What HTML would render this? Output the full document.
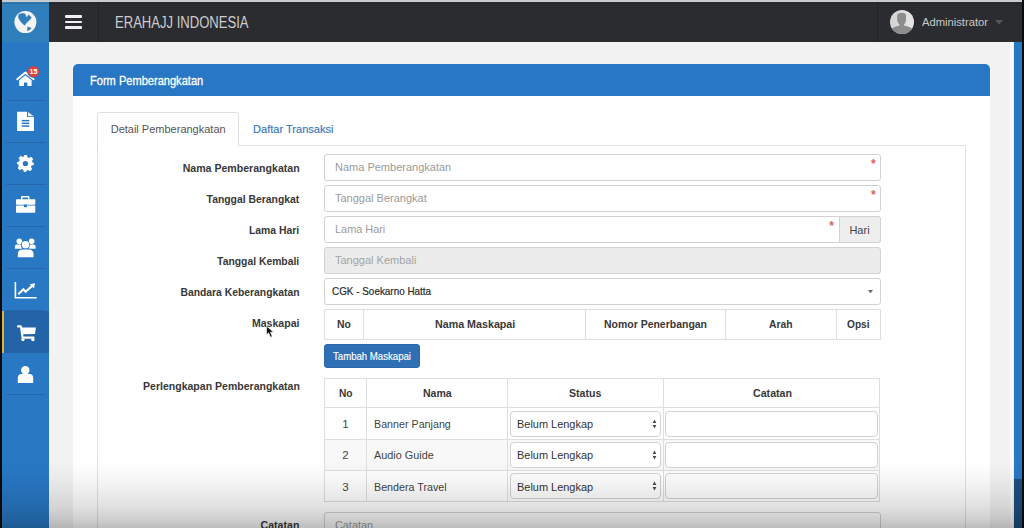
<!DOCTYPE html>
<html><head><meta charset="utf-8">
<style>
*{box-sizing:border-box;margin:0;padding:0}
html,body{width:1024px;height:528px;overflow:hidden;background:#f2f2f2;font-family:"Liberation Sans",sans-serif;position:relative}
.a{position:absolute}
.t{position:absolute;white-space:nowrap;line-height:1}
.inp{position:absolute;background:#fff;border:1px solid #d2d2d2;border-radius:3px}
.hl{position:absolute;height:1px;background:#dedede}
.vl{position:absolute;width:1px;background:#dedede}
.sep{position:absolute;left:6px;width:40px;height:1px;background:#2567ab}
.ic{position:absolute}

</style></head>
<body>
<div id="wrap" style="position:absolute;left:0;top:0;width:1024px;height:528px">
<!-- frame strips -->
<div class="a" style="left:0;top:0;width:1024px;height:2.3px;background:#c9cbcd"></div>
<div class="a" style="left:0;top:0;width:2px;height:528px;background:#0b0b0b"></div>
<div class="a" style="left:1022px;top:0;width:2px;height:528px;background:#0b0b0b"></div>

<!-- header -->
<div class="a" style="left:49px;top:2px;width:973px;height:40px;background:#2b2c30"></div>
<div class="a" style="left:49px;top:3px;width:973px;height:1px;background:#242529"></div>
<div class="a" style="left:98px;top:2px;width:1px;height:40px;background:#222326"></div>
<div class="a" style="left:877px;top:2px;width:1px;height:40px;background:#222326"></div>
<div class="a" style="left:2px;top:2px;width:47px;height:40px;background:#317fba"></div>
<div class="a" style="left:2px;top:3px;width:47px;height:1px;background:#2b6c9f"></div>
<!-- hamburger -->
<div class="a" style="left:65px;top:15px;width:17px;height:2.5px;background:#f0f0f0;border-radius:1px"></div>
<div class="a" style="left:65px;top:20.5px;width:17px;height:2.5px;background:#f0f0f0;border-radius:1px"></div>
<div class="a" style="left:65px;top:26px;width:17px;height:2.5px;background:#f0f0f0;border-radius:1px"></div>
<!-- globe -->
<svg class="ic" style="left:14px;top:11px" width="23" height="23" viewBox="0 0 23 23">
<circle cx="11.4" cy="11.1" r="11" fill="#f4f4f4"/>
<path d="M4.4 5.9 Q4.4 3.6 5.6 2.9 L8.9 2.6 L10.9 2.8 L11.4 4.2 L12.5 6.3 L13.9 5.6 L14.1 4.2 L15 4.3 L17.3 6.4 L15.6 9 L12.6 11.6 L10.6 14.2 L8 11.9 L5.5 8.8 Z" fill="#317fba" stroke="#317fba" stroke-width="0.6" stroke-linejoin="round"/>
<path d="M13.7 16 L17.3 17.1 L15.3 19 L13.4 19.7 Z" fill="#317fba" stroke="#317fba" stroke-width="0.5" stroke-linejoin="round"/>
</svg>
<!-- avatar -->
<svg class="ic" style="left:890px;top:10px" width="24" height="24" viewBox="0 0 24 24">
<defs><clipPath id="cc"><circle cx="12" cy="12" r="12"/></clipPath>
<linearGradient id="ag" x1="0" y1="0" x2="1" y2="0"><stop offset="0" stop-color="#d2d2d2"/><stop offset="1" stop-color="#e6e6e6"/></linearGradient></defs>
<circle cx="12" cy="12" r="12" fill="url(#ag)"/>
<g clip-path="url(#cc)" fill="#8c8c8c">
<path d="M7.2 5.2 Q7.5 2.7 11.6 2.7 Q15.8 2.7 16 5.2 L16 10.5 Q15.5 13 14 14.5 L14 15.6 Q20 16.6 24 19.5 L24 24 L0 24 L0 19.5 Q4 16.6 9.5 15.6 L9.5 14.5 Q7.7 13 7.2 10.5 Z"/>
</g>
</svg>
<!-- caret -->
<svg class="ic" style="left:995px;top:20px" width="8" height="5" viewBox="0 0 8 5"><path d="M0 0 L8 0 L4 4.5Z" fill="#56575b"/></svg>

<!-- sidebar -->
<div class="a" style="left:2px;top:42px;width:47px;height:486px;background:#2878c4"></div>
<div class="sep" style="top:100px"></div>
<div class="sep" style="top:142px"></div>
<div class="sep" style="top:184px"></div>
<div class="sep" style="top:226px"></div>
<div class="sep" style="top:268px"></div>
<div class="sep" style="top:310px"></div>
<div class="sep" style="top:394px"></div>
<div class="a" style="left:2px;top:311px;width:47px;height:42px;background:#2264a7"></div>
<div class="a" style="left:2px;top:311px;width:2px;height:42px;background:#e3b52c"></div>


<!-- sidebar icons -->
<svg class="a" style="left:0;top:0" width="60" height="400" viewBox="0 0 60 400">
<g fill="#ffffff">
<!-- home -->
<path d="M17.2 79.2 L25.4 72.6 L33.6 79.2" fill="none" stroke="#fff" stroke-width="1.9" stroke-linecap="round" stroke-linejoin="round"/>
<path d="M25.4 75.2 L31.6 80.2 L31.6 86 L27.3 86 L27.3 82.4 L24 82.4 L24 86 L19.2 86 L19.2 80.2 Z"/>
<circle cx="33.4" cy="71.5" r="6.2" fill="#2a76c3"/>
<circle cx="33.4" cy="71.5" r="5.6" fill="#e4403a"/>
<text x="33.6" y="74.1" font-family="Liberation Sans" font-weight="bold" font-size="7.2" fill="#fff" text-anchor="middle">15</text>
<!-- file -->
<path d="M17.1 111.7 L27 111.7 L27 117.1 L33.9 117.1 L33.9 131 L17.1 131 Z"/>
<path d="M28 111.9 L33.7 116.2 L28 116.2 Z" fill="#e8f2fb"/>
<rect x="21.7" y="119.9" width="7.6" height="1.5" fill="#2a76c3"/>
<rect x="21.7" y="122.6" width="7.6" height="1.5" fill="#2a76c3"/>
<rect x="21.7" y="125.3" width="7.6" height="1.5" fill="#2a76c3"/>
<!-- gear -->
<g transform="translate(25.4 163.5)">
<path id="gear" d="M-1.6 -8.4 L1.6 -8.4 L2.1 -6.2 L3.6 -5.6 L5.6 -6.8 L7.8 -4.6 L6.6 -2.6 L7.2 -1.1 L8.4 -0.6 L8.4 1.6 L6.2 2.1 L5.6 3.6 L6.8 5.6 L4.6 7.8 L2.6 6.6 L1.1 7.2 L0.6 8.4 L-1.6 8.4 L-2.1 6.2 L-3.6 5.6 L-5.6 6.8 L-7.8 4.6 L-6.6 2.6 L-7.2 1.1 L-8.4 0.6 L-8.4 -1.6 L-6.2 -2.1 L-5.6 -3.6 L-6.8 -5.6 L-4.6 -7.8 L-2.6 -6.6 L-1.1 -7.2 Z"/>
<circle r="2.6" fill="#2a76c3"/>
</g>
<!-- briefcase -->
<path d="M21 199.5 L21 197 Q21 196 22 196 L28.5 196 Q29.5 196 29.5 197 L29.5 199.5 L28 199.5 L28 197.5 L22.5 197.5 L22.5 199.5 Z"/>
<rect x="16" y="199.3" width="19.3" height="5.5" rx="0.8"/>
<rect x="16" y="205.6" width="19.3" height="7.2" rx="0.8"/>
<rect x="23.9" y="204.6" width="3" height="2.6" fill="#2a76c3"/>
<!-- users -->
<circle cx="19.3" cy="241.3" r="2.8"/>
<circle cx="31.6" cy="241.3" r="2.8"/>
<path d="M14.9 248.8 L14.9 246.3 Q14.9 244.4 17 244.4 L21.3 244.4 Q20.8 246.5 22 248.8 Z"/>
<path d="M35.6 248.8 L35.6 246.3 Q35.6 244.4 33.5 244.4 L29.4 244.4 Q29.8 246.5 28.6 248.8 Z"/>
<circle cx="25.5" cy="244.8" r="3.7" stroke="#2a76c3" stroke-width="1.2" paint-order="stroke"/>
<path d="M17.8 257.3 L17.8 254 Q17.8 249.4 22.5 249.4 L28.8 249.4 Q33.5 249.4 33.5 254 L33.5 257.3 Z" stroke="#2a76c3" stroke-width="1.2" paint-order="stroke"/>
<!-- chart -->
<path d="M15.4 282.1 L15.4 297.8 L36.7 297.8" fill="none" stroke="#fff" stroke-width="1.6"/>
<path d="M18.3 294.2 L23.4 289.2 L25.6 291.8 L32.4 285.6" fill="none" stroke="#fff" stroke-width="2.1" stroke-linejoin="miter"/>
<path d="M29.6 284.2 L35 283.3 L34.1 288.6 Z"/>
<!-- user -->
<circle cx="25.3" cy="370.3" r="4.2"/>
<path d="M17.8 383 L17.8 377.8 Q17.8 374 21.6 374 L29.4 374 Q33.2 374 33.2 377.8 L33.2 383 Z"/>
</g>
</svg>
<svg class="a" style="left:0;top:300px" width="60" height="60" viewBox="0 300 60 60">
<g fill="#fff">
<path d="M18 326.4 L20.9 326.4 L22.6 337.6 L33.6 337.6" fill="none" stroke="#fff" stroke-width="2.1" stroke-linecap="round" stroke-linejoin="round"/>
<path d="M21.8 327.4 L35.9 327.4 L35 333.9 L22.8 334.2 Z"/>
<circle cx="22.9" cy="339.6" r="1.7"/>
<circle cx="32.9" cy="339.6" r="1.7"/>
</g>
</svg>

<!-- content: right blue strip -->
<div class="a" style="left:1010px;top:42px;width:4px;height:486px;background:#fafafa"></div>
<div class="a" style="left:1013px;top:42px;width:1px;height:486px;background:#e3f1fa"></div>
<div class="a" style="left:1014px;top:42px;width:8px;height:437px;background:#2878c4"></div>
<div class="a" style="left:1014px;top:479px;width:8px;height:49px;background:#1d4f7e"></div>

<!-- panel -->
<div class="a" style="left:73px;top:64px;width:917px;height:470px;background:#fff;border-radius:5px 5px 0 0"></div>
<div class="a" style="left:73px;top:64px;width:917px;height:32px;background:#2877c4;border-radius:5px 5px 0 0"></div>

<!-- tabs -->
<div class="a" style="left:97px;top:145px;width:869px;height:400px;border:1px solid #e2e2e2;border-bottom:none"></div>
<div class="a" style="left:97px;top:112px;width:142px;height:34px;background:#fff;border:1px solid #e0e0e0;border-bottom:none;border-radius:4px 4px 0 0"></div>

<!-- inputs -->
<div class="inp" style="left:324px;top:154px;width:557px;height:27px"></div>
<div class="inp" style="left:324px;top:185px;width:557px;height:27px"></div>
<div class="inp" style="left:324px;top:216px;width:557px;height:27px"></div>
<div class="a" style="left:839px;top:216px;width:42px;height:27px;background:#eeeeee;border:1px solid #d2d2d2;border-radius:0 3px 3px 0"></div>
<div class="inp" style="left:324px;top:247px;width:557px;height:27px;background:#ececec"></div>
<div class="inp" style="left:324px;top:278px;width:557px;height:27px"></div>
<svg class="ic" style="left:867.5px;top:289.6px" width="5" height="4" viewBox="0 0 5 4"><path d="M0 0 L5 0 L2.5 3.2Z" fill="#666"/></svg>
<div class="inp" style="left:324px;top:512px;width:557px;height:27px"></div>
<!-- asterisks -->
<div class="t" style="left:871px;top:157.6px;font-size:12px;color:#e0605a;font-weight:bold">*</div>
<div class="t" style="left:871px;top:188.6px;font-size:12px;color:#e0605a;font-weight:bold">*</div>
<div class="t" style="left:829.3px;top:219.8px;font-size:12px;color:#e0605a;font-weight:bold">*</div>

<!-- maskapai table -->
<div class="a" style="left:324px;top:309px;width:557px;height:31px;border:1px solid #dedede"></div>
<div class="vl" style="left:363px;top:309px;height:31px"></div>
<div class="vl" style="left:585px;top:309px;height:31px"></div>
<div class="vl" style="left:725px;top:309px;height:31px"></div>
<div class="vl" style="left:836px;top:309px;height:31px"></div>
<!-- button -->
<div class="a" style="left:324px;top:344px;width:96px;height:24px;background:#2e6fb5;border-radius:3px;border:1px solid #2b69ab"></div>

<!-- perlengkapan table -->
<div class="a" style="left:324px;top:378px;width:556px;height:124px;border:1px solid #dedede"></div>
<div class="a" style="left:325px;top:439px;width:554px;height:31.5px;background:#f8f8f8"></div>
<div class="hl" style="left:324px;top:407px;width:556px"></div>
<div class="hl" style="left:324px;top:438.6px;width:556px"></div>
<div class="hl" style="left:324px;top:470px;width:556px"></div>
<div class="vl" style="left:366px;top:378px;height:123px"></div>
<div class="vl" style="left:507px;top:378px;height:123px"></div>
<div class="vl" style="left:663px;top:378px;height:123px"></div>
<div class="inp" style="left:510px;top:411px;width:151px;height:26px;border-radius:4px"></div>
<div class="inp" style="left:510px;top:442px;width:151px;height:26px;border-radius:4px"></div>
<div class="inp" style="left:510px;top:473px;width:151px;height:26px;border-radius:4px"></div>
<div class="inp" style="left:665px;top:411px;width:213px;height:26px;border-radius:4px"></div>
<div class="inp" style="left:665px;top:442px;width:213px;height:26px;border-radius:4px"></div>
<div class="inp" style="left:665px;top:473px;width:213px;height:26px;border-radius:4px"></div>
<svg class="ic" style="left:652px;top:419px" width="5" height="10" viewBox="0 0 5 10"><path d="M0.6 4 L2.5 0.6 L4.4 4Z M0.6 6 L4.4 6 L2.5 9.4Z" fill="#4a4a4a"/></svg>
<svg class="ic" style="left:652px;top:450px" width="5" height="10" viewBox="0 0 5 10"><path d="M0.6 4 L2.5 0.6 L4.4 4Z M0.6 6 L4.4 6 L2.5 9.4Z" fill="#4a4a4a"/></svg>
<svg class="ic" style="left:652px;top:481px" width="5" height="10" viewBox="0 0 5 10"><path d="M0.6 4 L2.5 0.6 L4.4 4Z M0.6 6 L4.4 6 L2.5 9.4Z" fill="#4a4a4a"/></svg>

<div class='t' style='left:115.00px;top:15.26px;font-size:16px;font-weight:400;color:#cdcdcd;transform:scaleX(0.8160);transform-origin:0 0;'>ERAHAJJ INDONESIA</div>
<div class='t' style='left:922.00px;top:16.67px;font-size:11.5px;font-weight:400;color:#c9c9c9;transform:scaleX(0.9742);transform-origin:0 0;'>Administrator</div>
<div class='t' style='left:89.60px;top:73.60px;font-size:13px;font-weight:400;color:#ffffff;transform:scaleX(0.8514);transform-origin:0 0;-webkit-text-stroke:0.3px #fff;'>Form Pemberangkatan</div>
<div class='t' style='left:110.70px;top:123.89px;font-size:11px;font-weight:400;color:#555555;'>Detail Pemberangkatan</div>
<div class='t' style='left:253.20px;top:124.09px;font-size:11px;font-weight:400;color:#3478c0;transform:scaleX(1.0051);transform-origin:0 0;-webkit-text-stroke:0.15px #3478c0;'>Daftar Transaksi</div>
<div class='t' style='left:177.93px;top:162.59px;font-size:11px;font-weight:700;color:#383838;transform:scaleX(0.9616);transform-origin:100% 0;'>Nama Pemberangkatan</div>
<div class='t' style='left:201.38px;top:193.69px;font-size:11px;font-weight:700;color:#383838;transform:scaleX(0.9428);transform-origin:100% 0;'>Tanggal Berangkat</div>
<div class='t' style='left:246.40px;top:224.59px;font-size:11px;font-weight:700;color:#383838;transform:scaleX(0.9454);transform-origin:100% 0;'>Lama Hari</div>
<div class='t' style='left:212.40px;top:255.69px;font-size:11px;font-weight:700;color:#383838;transform:scaleX(0.9415);transform-origin:100% 0;'>Tanggal Kembali</div>
<div class='t' style='left:173.05px;top:286.69px;font-size:11px;font-weight:700;color:#383838;transform:scaleX(0.9412);transform-origin:100% 0;'>Bandara Keberangkatan</div>
<div class='t' style='left:250.07px;top:317.59px;font-size:11px;font-weight:700;color:#383838;transform:scaleX(0.9610);transform-origin:100% 0;'>Maskapai</div>
<div class='t' style='left:135.86px;top:380.79px;font-size:11px;font-weight:700;color:#383838;transform:scaleX(0.9570);transform-origin:100% 0;'>Perlengkapan Pemberangkatan</div>
<div class='t' style='left:259.46px;top:520.19px;font-size:11px;font-weight:700;color:#383838;transform:scaleX(0.9617);transform-origin:100% 0;'>Catatan</div>
<div class='t' style='left:335.00px;top:161.79px;font-size:11px;font-weight:400;color:#9b9b9b;'>Nama Pemberangkatan</div>
<div class='t' style='left:335.00px;top:193.19px;font-size:11px;font-weight:400;color:#9b9b9b;'>Tanggal Berangkat</div>
<div class='t' style='left:335.00px;top:224.09px;font-size:11px;font-weight:400;color:#9b9b9b;transform:scaleX(0.9911);transform-origin:0 0;'>Lama Hari</div>
<div class='t' style='left:335.00px;top:255.39px;font-size:11px;font-weight:400;color:#a3a3a3;'>Tanggal Kembali</div>
<div class='t' style='left:331.60px;top:285.99px;font-size:11px;font-weight:400;color:#2a2a2a;transform:scaleX(0.9004);transform-origin:0 0;-webkit-text-stroke:0.2px #2a2a2a;'>CGK - Soekarno Hatta</div>
<div class='t' style='left:335.00px;top:519.89px;font-size:11px;font-weight:400;color:#9b9b9b;transform:scaleX(0.9862);transform-origin:0 0;'>Catatan</div>
<div class='t' style='left:849.41px;top:224.69px;font-size:11px;font-weight:400;color:#444444;'>Hari</div>
<div class='t' style='left:337.20px;top:319.49px;font-size:11px;font-weight:700;color:#383838;transform:scaleX(0.9474);transform-origin:0 0;'>No</div>
<div class='t' style='left:434.50px;top:319.49px;font-size:11px;font-weight:700;color:#383838;transform:scaleX(0.9728);transform-origin:0 0;'>Nama Maskapai</div>
<div class='t' style='left:604.00px;top:319.49px;font-size:11px;font-weight:700;color:#383838;transform:scaleX(0.9521);transform-origin:0 0;'>Nomor Penerbangan</div>
<div class='t' style='left:769.00px;top:319.49px;font-size:11px;font-weight:700;color:#383838;transform:scaleX(0.9377);transform-origin:0 0;'>Arah</div>
<div class='t' style='left:847.00px;top:319.49px;font-size:11px;font-weight:700;color:#383838;transform:scaleX(0.9242);transform-origin:0 0;'>Opsi</div>
<div class='t' style='left:333.30px;top:351.29px;font-size:11px;font-weight:400;color:#ffffff;transform:scaleX(0.8736);transform-origin:0 0;-webkit-text-stroke:0.15px #fff;'>Tambah Maskapai</div>
<div class='t' style='left:338.70px;top:387.89px;font-size:11px;font-weight:700;color:#383838;transform:scaleX(0.9269);transform-origin:0 0;'>No</div>
<div class='t' style='left:422.80px;top:387.89px;font-size:11px;font-weight:700;color:#383838;transform:scaleX(0.9577);transform-origin:0 0;'>Nama</div>
<div class='t' style='left:569.20px;top:387.89px;font-size:11px;font-weight:700;color:#383838;transform:scaleX(0.9606);transform-origin:0 0;'>Status</div>
<div class='t' style='left:752.50px;top:387.89px;font-size:11px;font-weight:700;color:#383838;transform:scaleX(0.9667);transform-origin:0 0;'>Catatan</div>
<div class='t' style='left:342.30px;top:418.97px;font-size:11.5px;font-weight:400;color:#444444;'>1</div>
<div class='t' style='left:374.00px;top:418.97px;font-size:11.5px;font-weight:400;color:#444444;transform:scaleX(0.9311);transform-origin:0 0;'>Banner Panjang</div>
<div class='t' style='left:517.30px;top:418.97px;font-size:11.5px;font-weight:400;color:#333333;transform:scaleX(0.9522);transform-origin:0 0;'>Belum Lengkap</div>
<div class='t' style='left:342.30px;top:450.27px;font-size:11.5px;font-weight:400;color:#444444;'>2</div>
<div class='t' style='left:374.00px;top:450.27px;font-size:11.5px;font-weight:400;color:#444444;transform:scaleX(0.9432);transform-origin:0 0;'>Audio Guide</div>
<div class='t' style='left:517.30px;top:450.27px;font-size:11.5px;font-weight:400;color:#333333;transform:scaleX(0.9522);transform-origin:0 0;'>Belum Lengkap</div>
<div class='t' style='left:342.30px;top:481.57px;font-size:11.5px;font-weight:400;color:#444444;'>3</div>
<div class='t' style='left:374.00px;top:481.57px;font-size:11.5px;font-weight:400;color:#444444;transform:scaleX(0.9308);transform-origin:0 0;'>Bendera Travel</div>
<div class='t' style='left:517.30px;top:481.57px;font-size:11.5px;font-weight:400;color:#333333;transform:scaleX(0.9522);transform-origin:0 0;'>Belum Lengkap</div>
<!-- cursor -->
<svg class="a" style="left:260px;top:320px" width="20" height="22" viewBox="260 320 20 22">
<path d="M266.6 326.2 L266.6 334.8 L268.7 332.8 L270.4 337.2 L272.2 336.4 L270.5 332.2 L273.4 332 Z" fill="#0d0d0d" stroke="#fff" stroke-width="0.6" stroke-linejoin="round"/>
</svg>

<div class="a" style="left:0;top:0;width:1024px;height:528px;background:linear-gradient(to bottom, rgba(0,0,0,0) 0px, rgba(0,0,0,0) 460px, rgba(0,0,0,0.02) 472px, rgba(0,0,0,0.05) 485px, rgba(0,0,0,0.12) 507px, rgba(0,0,0,0.19) 519px, rgba(0,0,0,0.26) 528px);pointer-events:none"></div>
</div>
</body></html>
